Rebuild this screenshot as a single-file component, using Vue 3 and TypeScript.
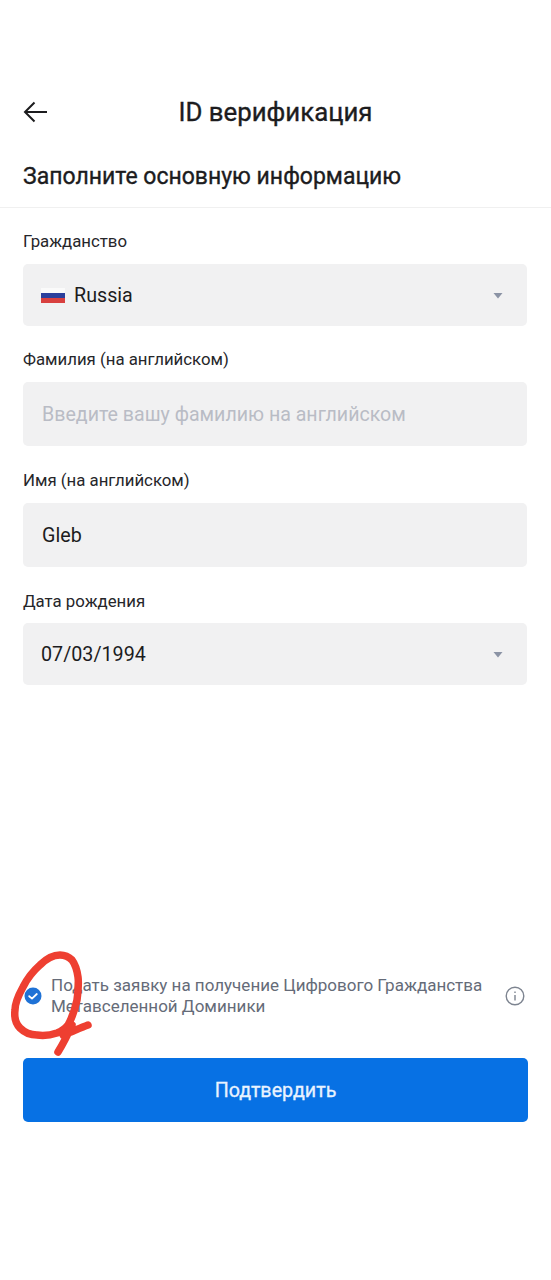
<script setup lang="ts">
interface Field {
  label?: string
  value?: string
  placeholder?: string
  flag?: boolean
  caret?: boolean
  kind: string
}
const fields: Field[] = [
  { label: 'Гражданство', value: 'Russia', flag: true, caret: true, kind: 'short first' },
  { label: 'Фамилия (на английском)', placeholder: 'Введите вашу фамилию на английском', kind: 'tall' },
  { label: 'Имя (на английском)', value: 'Gleb', kind: 'tall' },
  { label: 'Дата рождения', value: '07/03/1994', caret: true, kind: 'short date' },
]
</script>

<template>
  <main class="page">
    <header class="top">
      <svg class="back" viewBox="0 0 24 22" width="24" height="22" fill="none" stroke="#1c1c1e" stroke-width="2">
        <path d="M24 11H2M11.5 1.5 2 11l9.5 9.5" />
      </svg>
      <h1 class="title">ID верификация</h1>
    </header>
    <h2 class="subtitle">Заполните основную информацию</h2>
    <div class="form">
      <section v-for="f in fields" :key="f.label" class="field" :class="f.kind">
        <label class="label">{{ f.label }}</label>
        <div class="box">
          <span v-if="f.flag" class="flag"><i class="w"></i><i class="b"></i><i class="r"></i></span>
          <span v-if="f.value" class="value">{{ f.value }}</span>
          <span v-else class="placeholder">{{ f.placeholder }}</span>
          <svg v-if="f.caret" class="caret" viewBox="0 0 10 7" width="10" height="7"><path d="M0.5 1h9L5 6.5z" fill="#8b93a5" /></svg>
        </div>
      </section>
    </div>
    <div class="agree">
      <svg class="check" viewBox="0 0 18 18" width="18" height="18">
        <circle cx="9" cy="9" r="8.5" fill="#1f72d6" />
        <path d="M5.2 9.2 8 11.6l4.8-4.6" fill="none" stroke="#fff" stroke-width="1.8" stroke-linecap="round" stroke-linejoin="round" />
      </svg>
      <p class="agree-text">Подать заявку на получение Цифрового Гражданства Метавселенной Доминики</p>
      <svg class="info" viewBox="0 0 20 20" width="20" height="20" fill="none" stroke="#7d8490" stroke-width="1.4">
        <circle cx="10" cy="10" r="8.8" />
        <path d="M10 9v5.6M10 5.4v1.6" />
      </svg>
    </div>
    <button class="confirm" type="button">Подтвердить</button>
    <svg class="scribble" viewBox="0 0 100 110" width="100" height="110" fill="none" stroke="#ee3f31" stroke-width="7.5" stroke-linecap="round" stroke-linejoin="round">
      <path d="M60 7C52 7 46 11 40 17 32 24 27 31 23 39 18 48 15 55 15 62 14 70 16 76 20 80 25 85 30 87 37 87 44 88 51 87 57 85 62 83 65 81 68 77 72 70 75 61 77 52 78 44 79 36 78 29 77 22 75 16 72 12 68 8 65 7 60 7Z" />
      <path d="M88 77C80 80 71 84 63 87M72 77C68 86 63 96 58 104" />
    </svg>
  </main>
</template>

<style scoped>
.page {
  position: relative;
  width: 551px;
  height: 1280px;
  background: #fff;
  font-family: Roboto, "Noto Sans", sans-serif;
  color: #1c1c1e;
  overflow: hidden;
  box-sizing: border-box;
  padding-top: 92px;
}
.top {
  position: relative;
  height: 40px;
  display: flex;
  align-items: center;
  justify-content: center;
}
.back {
  position: absolute;
  left: 23px;
  top: 9px;
}
.title {
  margin: 0;
  font-size: 25.8px;
  font-weight: 400;
  -webkit-text-stroke: 0.35px #1c1c1e;
  line-height: 40px;
}
.subtitle {
  margin: 30px 0 0;
  padding: 0 23px 15px;
  font-size: 23px;
  font-weight: 400;
  -webkit-text-stroke: 0.35px #1c1c1e;
  line-height: 30px;
  height: 30px;
  border-bottom: 1px solid #f0f0f0;
}
.form {
  padding: 0 24px 0 23px;
}
.field {
  display: flex;
  flex-direction: column;
}
.field.first { margin-top: 22px; }
.label {
  font-size: 16.8px;
  line-height: 22px;
  color: #26262a;
  margin-bottom: 12px;
}
.date .label { margin-bottom: 11px; }
.box {
  display: flex;
  align-items: center;
  background: #f1f1f2;
  border-radius: 5px;
  padding: 0 19px;
}
.first .box { height: 62px; }
.date .box { height: 62px; padding-left: 18px; }
.tall .box { height: 64px; }
.first { padding-bottom: 22px; }
.tall { padding-bottom: 23px; }
.flag {
  display: flex;
  flex-direction: column;
  width: 24px;
  height: 15px;
  margin-right: 9px;
  margin-left: -1px;
}
.flag i { flex: 1; display: block; }
.flag .w { background: #fafafa; }
.flag .b { background: #2a3f9c; }
.flag .r { background: #d8403f; }
.value {
  font-size: 19.7px;
}
.placeholder {
  font-size: 19.6px;
  color: #b9bcc5;
}
.caret {
  margin-left: auto;
  margin-right: 5px;
}
.agree {
  position: absolute;
  left: 24px;
  top: 975px;
  width: 503px;
  display: flex;
  align-items: center;
}
.check {
  flex: none;
  margin-right: 9px;
}
.agree-text {
  margin: 0;
  width: 440px;
  font-size: 17px;
  line-height: 21px;
  color: #656b78;
}
.info {
  flex: none;
  margin-left: auto;
  margin-right: 2px;
}
.confirm {
  position: absolute;
  left: 23px;
  top: 1058px;
  width: 505px;
  height: 64px;
  border: 0;
  border-radius: 5px;
  background: #0771e4;
  color: #e9f3ff;
  font-family: inherit;
  font-size: 19.7px;
  font-weight: 400;
  -webkit-text-stroke: 0.3px #e9f3ff;
}
.scribble {
  position: absolute;
  left: 0;
  top: 948px;
  pointer-events: none;
}
</style>
